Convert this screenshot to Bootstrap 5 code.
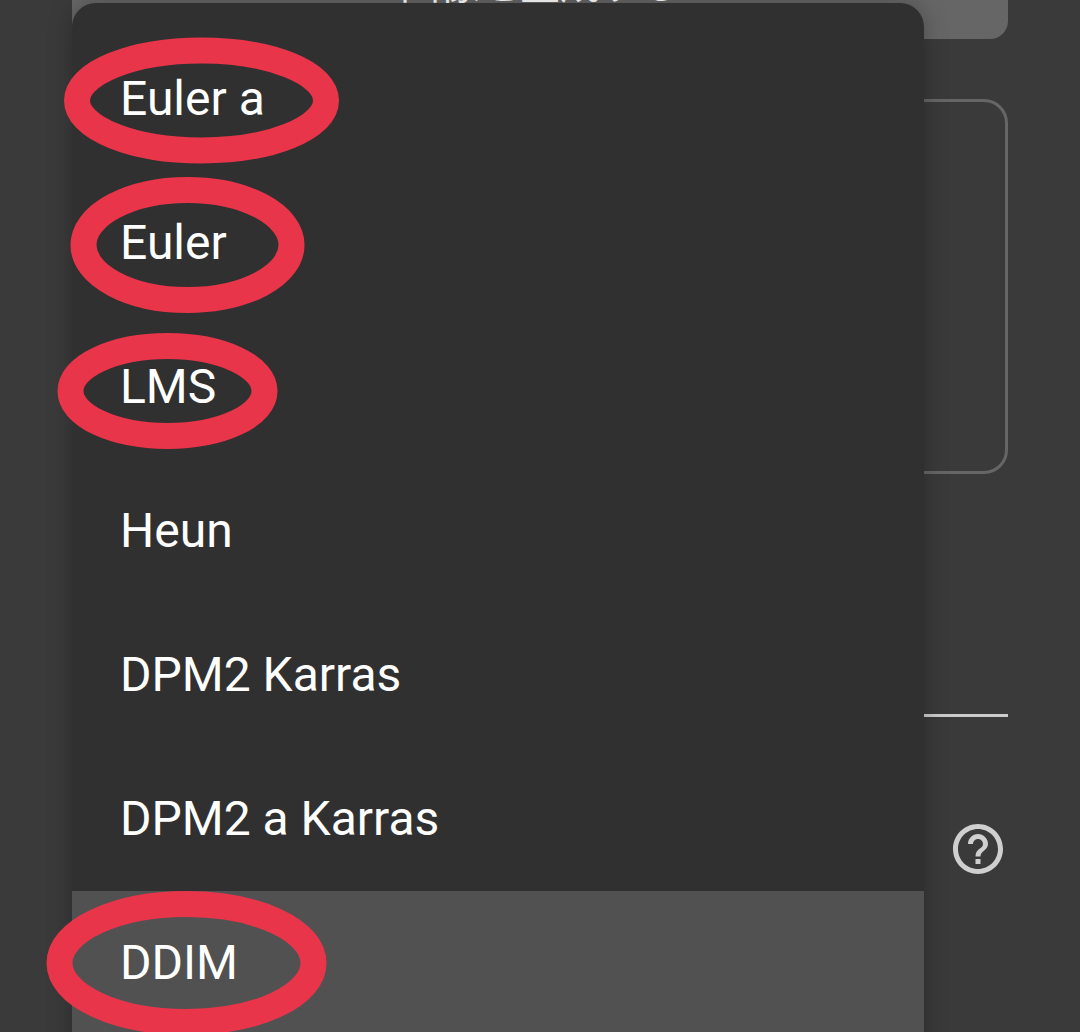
<!DOCTYPE html>
<html lang="ja">
<head>
  <meta charset="UTF-8" />
  <meta name="viewport" content="width=device-width, initial-scale=1" />
  <title>Sampler</title>
  <link href="https://cdn.jsdelivr.net/npm/bootstrap@5.3.0/dist/css/bootstrap.min.css" rel="stylesheet" />
  <style>
    html, body { height: 100%; }
    body {
      background: #3a3a3a;
      font-family: Roboto, "Noto Sans CJK JP", sans-serif;
      overflow: hidden;
    }
    .screen { position: relative; width: 1080px; height: 1032px; overflow: hidden; padding: 0 72px; }
    .gen-btn {
      height: 39px;
      background: #666;
      border-radius: 0 0 18px 18px;
      color: #fff;
      font-size: 40px;
      line-height: 1;
      overflow: hidden;
      text-align: center;
    }
    .gen-btn span { display: block; margin-top: -34px; }
    .prompt-box {
      height: 375px;
      margin-top: 60px;
      border: 3px solid #666;
      border-radius: 24px;
    }
    .slider-row { height: 243px; border-bottom: 3px solid #ccc; }
    .help-row { height: 264px; }
    .sampler-menu {
      position: absolute;
      left: 72px;
      top: 3px;
      width: 852px;
      height: 1100px;
      padding-top: 24px;
      background: #303030;
      border-radius: 24px 24px 0 0;
      box-shadow: 0 0 24px rgba(0, 0, 0, .25);
    }
    .sampler-item {
      height: 144px;
      padding-left: 48px;
      color: #fff;
      font-size: 48px;
      line-height: 144px;
    }
    .sampler-item.is-active { background: #515151; }
    .marks { position: absolute; left: 0; top: 0; }
  </style>
</head>
<body>

<div class="screen">
  <div class="gen-btn"><span>画像を生成する</span></div>
  <div class="prompt-box"></div>
  <div class="slider-row"></div>
  <div class="help-row d-flex justify-content-end align-items-center">
    <svg width="60" height="60" viewBox="0 0 24 24" fill="#cfcfcf">
      <path d="M11 18h2v-2h-2v2zm1-16C6.48 2 2 6.48 2 12s4.480 10 10 10 10-4.480 10-10S17.520 2 12 2zm0 18c-4.410 0-8-3.590-8-8s3.590-8 8-8 8 3.590 8 8-3.590 8-8 8zm0-14c-2.210 0-4 1.790-4 4h2c0-1.100.9-2 2-2s2 .9 2 2c0 2-3 1.750-3 5h2c0-2.250 3-2.500 3-5 0-2.210-1.790-4-4-4z"/>
    </svg>
  </div>

  <div class="sampler-menu">
    <div class="sampler-item">Euler a</div>
    <div class="sampler-item">Euler</div>
    <div class="sampler-item">LMS</div>
    <div class="sampler-item">Heun</div>
    <div class="sampler-item">DPM2 Karras</div>
    <div class="sampler-item">DPM2 a Karras</div>
    <div class="sampler-item is-active">DDIM</div>
  </div>

  <!-- hand drawn red rings on top of the screenshot -->
  <svg class="marks" width="1080" height="1032" fill="none" stroke="#e8354a" stroke-width="26">
    <ellipse cx="201.500" cy="100.500" rx="124.500" ry="50" />
    <ellipse cx="187.500" cy="245" rx="104" ry="55" />
    <ellipse cx="167.500" cy="391" rx="97" ry="45" />
    <ellipse cx="186.500" cy="963" rx="127" ry="59" />
  </svg>
</div>

<script src="https://cdn.jsdelivr.net/npm/bootstrap@5.3.0/dist/js/bootstrap.bundle.min.js"></script>
</body>
</html>
